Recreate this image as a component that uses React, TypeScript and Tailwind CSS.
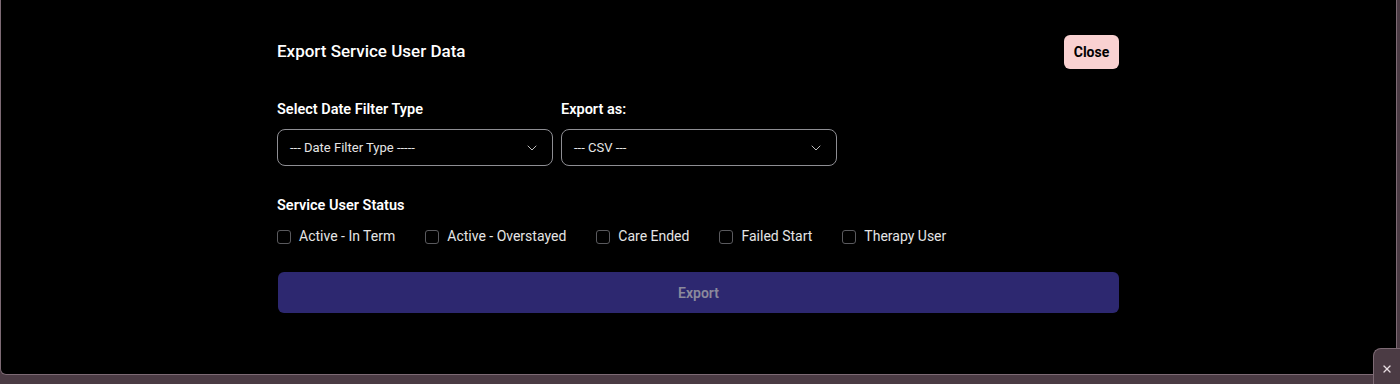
import { ChevronDown, X } from "lucide-react";

const statuses = ["Active - In Term", "Active - Overstayed", "Care Ended", "Failed Start", "Therapy User"];

function Select({ label, placeholder }: { label: string; placeholder: string }) {
  return (
    <div className="flex flex-col gap-[9px] w-[276px]">
      <span className="text-[14.5px] font-semibold text-white leading-5">{label}</span>
      <div className="h-[37px] rounded-lg border border-[#8e8e93] px-3 flex items-center justify-between text-[13px] text-[#e5e5e5]">
        <span>{placeholder}</span>
        <ChevronDown className="w-4 h-4 text-[#bdbdbd]" strokeWidth={1.5} />
      </div>
    </div>
  );
}

export default function App() {
  return (
    <div className="relative h-[384px] w-[1400px] bg-[#4b3b44] overflow-hidden" style={{ fontFamily: "Roboto, 'Noto Sans', sans-serif" }}>
      <div className="h-[375px] w-[1397px] bg-black border-l border-r border-b border-[#7d6a74] rounded-bl-[6px] rounded-br-[6px]">
        <div className="w-[842px] ml-[276px] pt-[35px] flex flex-col">
          <div className="flex items-center justify-between h-[34px]">
            <h2 className="text-[17px] font-medium text-white">Export Service User Data</h2>
            <button className="h-[34px] w-[55px] rounded-md bg-[#f9d1d1] text-[14px] font-bold text-black">Close</button>
          </div>
          <div className="flex gap-2 mt-[31px]">
            <Select label="Select Date Filter Type" placeholder="--- Date Filter Type -----" />
            <Select label="Export as:" placeholder="--- CSV ---" />
          </div>
          <span className="mt-[30px] text-[14.5px] font-semibold text-white leading-5">Service User Status</span>
          <div className="flex items-center gap-[30px] mt-[10px]">
            {statuses.map((s) => (
              <label key={s} className="flex items-center gap-2 text-[14px] text-[#e5e5e5]">
                <span className="w-[14px] h-[14px] rounded-[3px] border border-[#5a5a5e]" />
                {s}
              </label>
            ))}
          </div>
          <button className="mt-[25px] ml-px h-[41px] rounded-md bg-[#2d2870] text-[14px] font-semibold text-[#8b8a9c] pt-px">Export</button>
        </div>
      </div>
      <div className="absolute bottom-0 right-0 w-[27px] h-[36px] bg-[#4b3b44] border-l border-t border-[#7d6a74] rounded-tl-[8px] flex items-center justify-center pt-1">
        <X className="w-3 h-3 text-[#e8dde2]" strokeWidth={2.5} />
      </div>
    </div>
  );
}
